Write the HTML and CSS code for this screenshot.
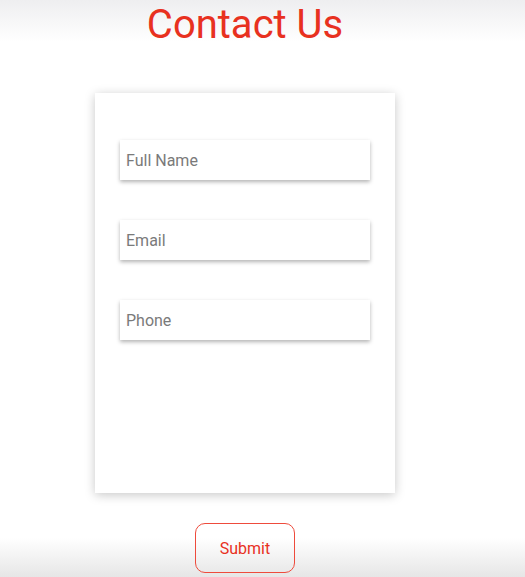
FILE: index.html
```html
<!DOCTYPE html>
<html lang="en">
<head>
<meta charset="utf-8">
<title>Contact Us</title>
<link rel="stylesheet" href="styles.css">
</head>
<body>
<div class="page">
  <h1 class="title">Contact Us</h1>
  <form class="card">
    <input class="field" type="text" placeholder="Full Name">
    <input class="field" type="email" placeholder="Email">
    <input class="field" type="tel" placeholder="Phone">
  </form>
  <button class="submit" type="button">Submit</button>
</div>
</body>
</html>
```

FILE: styles.css
```css
html {
  height: 100%;
  background: linear-gradient(to bottom, #eeeef0 0px, #ffffff 42px, #ffffff 538px, #e6e6e6 577px);
}
body {
  margin: 0;
  height: 100%;
  font-family: Roboto, "Liberation Sans", sans-serif;
}
.page {
  width: 490px;
  display: flex;
  flex-direction: column;
  align-items: center;
}
.title {
  margin: 0;
  font-size: 40px;
  font-weight: 400;
  line-height: 50px;
  color: #e8311f;
}
.card {
  margin-top: 43px;
  width: 300px;
  height: 400px;
  box-sizing: border-box;
  background: #fff;
  box-shadow: 0 2px 10px rgba(0, 0, 0, 0.22);
  padding: 47px 25px 0;
  display: flex;
  flex-direction: column;
  gap: 40px;
}
.field {
  width: 250px;
  height: 40px;
  box-sizing: border-box;
  border: none;
  outline: none;
  background: #fff;
  box-shadow: 0 2px 4px rgba(0, 0, 0, 0.3);
  padding: 0 6px;
  font-family: Roboto, "Liberation Sans", sans-serif;
  font-size: 16px;
  color: #333;
}
.field::placeholder {
  color: #7a7a7a;
}
.submit {
  margin-top: 30px;
  width: 100px;
  height: 50px;
  border: 1px solid #ee4b3c;
  border-radius: 10px;
  background: transparent;
  color: #e8311f;
  font-family: Roboto, "Liberation Sans", sans-serif;
  font-size: 16px;
}
```
